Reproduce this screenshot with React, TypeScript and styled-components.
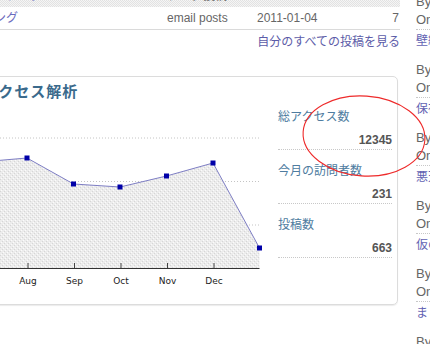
import React from 'react';
import styled, { createGlobalStyle } from 'styled-components';

const GlobalStyle = createGlobalStyle`
    html, body {
        margin: 0;
        padding: 0;
        overflow: hidden;
        background: #fff;
    }
    body {
        font-family: "Liberation Sans", "Noto Sans CJK JP", sans-serif;
        font-size: 12px;
        color: #666;
    }
`;

const Root = styled.div`
    position: relative;
    width: 430px;
    height: 344px;
    overflow: hidden;
`;
const Page = styled.div`
    display: flex;
    align-items: flex-start;
    margin-left: -40px;
`;
const Main = styled.main`
    flex: 0 0 440px;
`;

const PostTable = styled.div`
    margin-top: -15px;
    border-bottom: 1px solid #dadada;
`;
const Row = styled.div<{ $shade?: boolean }>`
    display: grid;
    grid-template-columns: 197px 90px 1fr 40px;
    align-items: center;
    height: 22px;
    padding: 0 1px 0 10px;
    line-height: 22px;
    white-space: nowrap;
    background: ${p =>
        p.$shade
            ? 'repeating-conic-gradient(#e2e2e2 0 25%, #f5f5f5 0 50%) 0 0 / 2px 2px'
            : '#fff'};
`;
const Cell = styled.span`
    color: #666;
`;
const LinkCell = styled.a`
    color: #6b6bbd;
    text-decoration: none;
`;
const NumCell = styled.span`
    text-align: right;
    color: #666;
`;
const MoreLink = styled.a`
    display: block;
    margin-top: 3px;
    text-align: right;
    line-height: 18px;
    color: #5c5ca8;
    text-decoration: none;
`;

const Card = styled.section`
    margin: 25px 2px 0 0;
    padding: 5px 5px 14px 21px;
    border: 1px solid #dcdcdc;
    border-radius: 5px;
    box-shadow: 0 1px 1px rgba(0, 0, 0, 0.08);
`;
const CardTitle = styled.h2`
    margin: 0 0 3px 1px;
    font-size: 15px;
    line-height: 20px;
    font-weight: bold;
    letter-spacing: 1px;
    color: #3a6a8c;
`;
const CardBody = styled.div`
    display: flex;
    align-items: flex-start;
    gap: 16px;
`;
const ChartSvg = styled.svg`
    display: block;
    flex: 0 0 280px;
`;
const Stats = styled.div`
    flex: 0 0 114px;
    padding-top: 3px;
`;
const Stat = styled.div`
    border-bottom: 1px dotted #c8c8c8;
    & + & {
        margin-top: 12px;
    }
`;
const StatLabel = styled.div`
    line-height: 18px;
    color: #4e7ca0;
    white-space: nowrap;
`;
const StatValue = styled.div`
    margin-top: 5px;
    line-height: 18px;
    text-align: right;
    font-weight: bold;
    color: #555;
`;

const Sidebar = styled.aside`
    flex: 0 0 80px;
    margin: -7px 0 0 16px;
    white-space: nowrap;
`;
const Entry = styled.div`
    margin-bottom: 11px;
`;
const Meta = styled.div<{ $rule?: boolean }>`
    font-size: 13px;
    line-height: 18px;
    color: #666;
    border-bottom: ${p => (p.$rule ? '1px dotted #c8c8c8' : 'none')};
`;
const EntryLink = styled.a`
    display: block;
    margin-top: 2px;
    line-height: 18px;
    color: #6262b2;
    text-decoration: none;
`;

const Highlight = styled.svg`
    position: absolute;
    left: 300px;
    top: 92px;
    pointer-events: none;
`;

// chart points: one per month, Jul..Jan
const STEP = 46.5;
const X0 = -1.5;
const VALUES = [57, 53, 79, 82, 71, 58, 143];
const MONTHS = ['', 'Aug', 'Sep', 'Oct', 'Nov', 'Dec', ''];
const AXIS = 163;
const GRID = [33, 76.5, 120];

const Chart: React.FC = () => {
    const pts = VALUES.map((y, i) => ({ x: X0 + i * STEP, y }));
    const startY = pts[0].y + ((pts[1].y - pts[0].y) * (0 - pts[0].x)) / STEP;
    const last = pts[pts.length - 1];
    const line = [`0,${startY}`, ...pts.slice(1).map(p => `${p.x},${p.y}`)].join(' ');
    const area = `${line} ${last.x},${AXIS} 0,${AXIS}`;
    return (
        <ChartSvg width={280} height={185} viewBox="0 0 280 185">
            <defs>
                <pattern id="dots" width="4" height="4" patternUnits="userSpaceOnUse">
                    <rect width="4" height="4" fill="#ececec" />
                    <rect x="0" y="0" width="1" height="1" fill="#d6d6d6" />
                    <rect x="2" y="2" width="1" height="1" fill="#d6d6d6" />
                    <rect x="1" y="3" width="1" height="1" fill="#fbfbfb" />
                    <rect x="3" y="1" width="1" height="1" fill="#fbfbfb" />
                </pattern>
            </defs>
            {GRID.map(y => (
                <line key={y} x1={0} x2={last.x} y1={y} y2={y} stroke="#c4c4c4" strokeDasharray="1 2" />
            ))}
            <polygon points={area} fill="url(#dots)" />
            <polyline points={line} fill="none" stroke="#7e7ec4" strokeWidth={1} />
            <line x1={0} x2={last.x} y1={AXIS + 0.5} y2={AXIS + 0.5} stroke="#333" />
            {pts.map((p, i) =>
                MONTHS[i] ? (
                    <g key={i}>
                        <line x1={p.x + 1} x2={p.x + 1} y1={AXIS - 5} y2={AXIS} stroke="#444" />
                        <text
                            x={p.x + 1}
                            y={AXIS + 16}
                            textAnchor="middle"
                            fontSize="9"
                            fontFamily="DejaVu Sans, sans-serif"
                            fill="#222"
                        >
                            {MONTHS[i]}
                        </text>
                    </g>
                ) : null
            )}
            {pts.map((p, i) => (
                <rect key={i} x={p.x - 2.5} y={p.y - 2.5} width={5} height={5} fill="#0000a8" />
            ))}
        </ChartSvg>
    );
};

const STATS = [
    { label: '総アクセス数', value: '12345' },
    { label: '今月の訪問者数', value: '231' },
    { label: '投稿数', value: '663' }
];

const ENTRIES = ['壁紙の更新', '保存の方法', '悪天候の日', '仮の投稿', 'まとめ', ''];

const App: React.FC = () => {
    return (
        <Root>
            <GlobalStyle />
            <Page>
                <Main>
                    <PostTable>
                        <Row $shade>
                            <LinkCell href="#">テストブログ</LinkCell>
                            <Cell>ブログ投稿</Cell>
                            <Cell>2011-01-04</Cell>
                            <NumCell>10</NumCell>
                        </Row>
                        <Row>
                            <LinkCell href="#">ロギング</LinkCell>
                            <Cell>email posts</Cell>
                            <Cell>2011-01-04</Cell>
                            <NumCell>7</NumCell>
                        </Row>
                    </PostTable>
                    <MoreLink href="#">自分のすべての投稿を見る</MoreLink>
                    <Card>
                        <CardTitle>アクセス解析</CardTitle>
                        <CardBody>
                            <Chart />
                            <Stats>
                                {STATS.map(s => (
                                    <Stat key={s.label}>
                                        <StatLabel>{s.label}</StatLabel>
                                        <StatValue>{s.value}</StatValue>
                                    </Stat>
                                ))}
                            </Stats>
                        </CardBody>
                    </Card>
                </Main>
                <Sidebar>
                    {ENTRIES.map((t, i) => (
                        <Entry key={i}>
                            <Meta>By: admin</Meta>
                            <Meta $rule>On: 2011-01-04</Meta>
                            <EntryLink href="#">{t}</EntryLink>
                        </Entry>
                    ))}
                </Sidebar>
            </Page>
            <Highlight width={132} height={90} viewBox="0 0 132 90">
                <ellipse
                    cx={64}
                    cy={44}
                    rx={61}
                    ry={40}
                    transform="rotate(4 64 44)"
                    fill="none"
                    stroke="#ee2a2a"
                    strokeWidth={1.1}
                />
            </Highlight>
        </Root>
    );
};

export default App;
